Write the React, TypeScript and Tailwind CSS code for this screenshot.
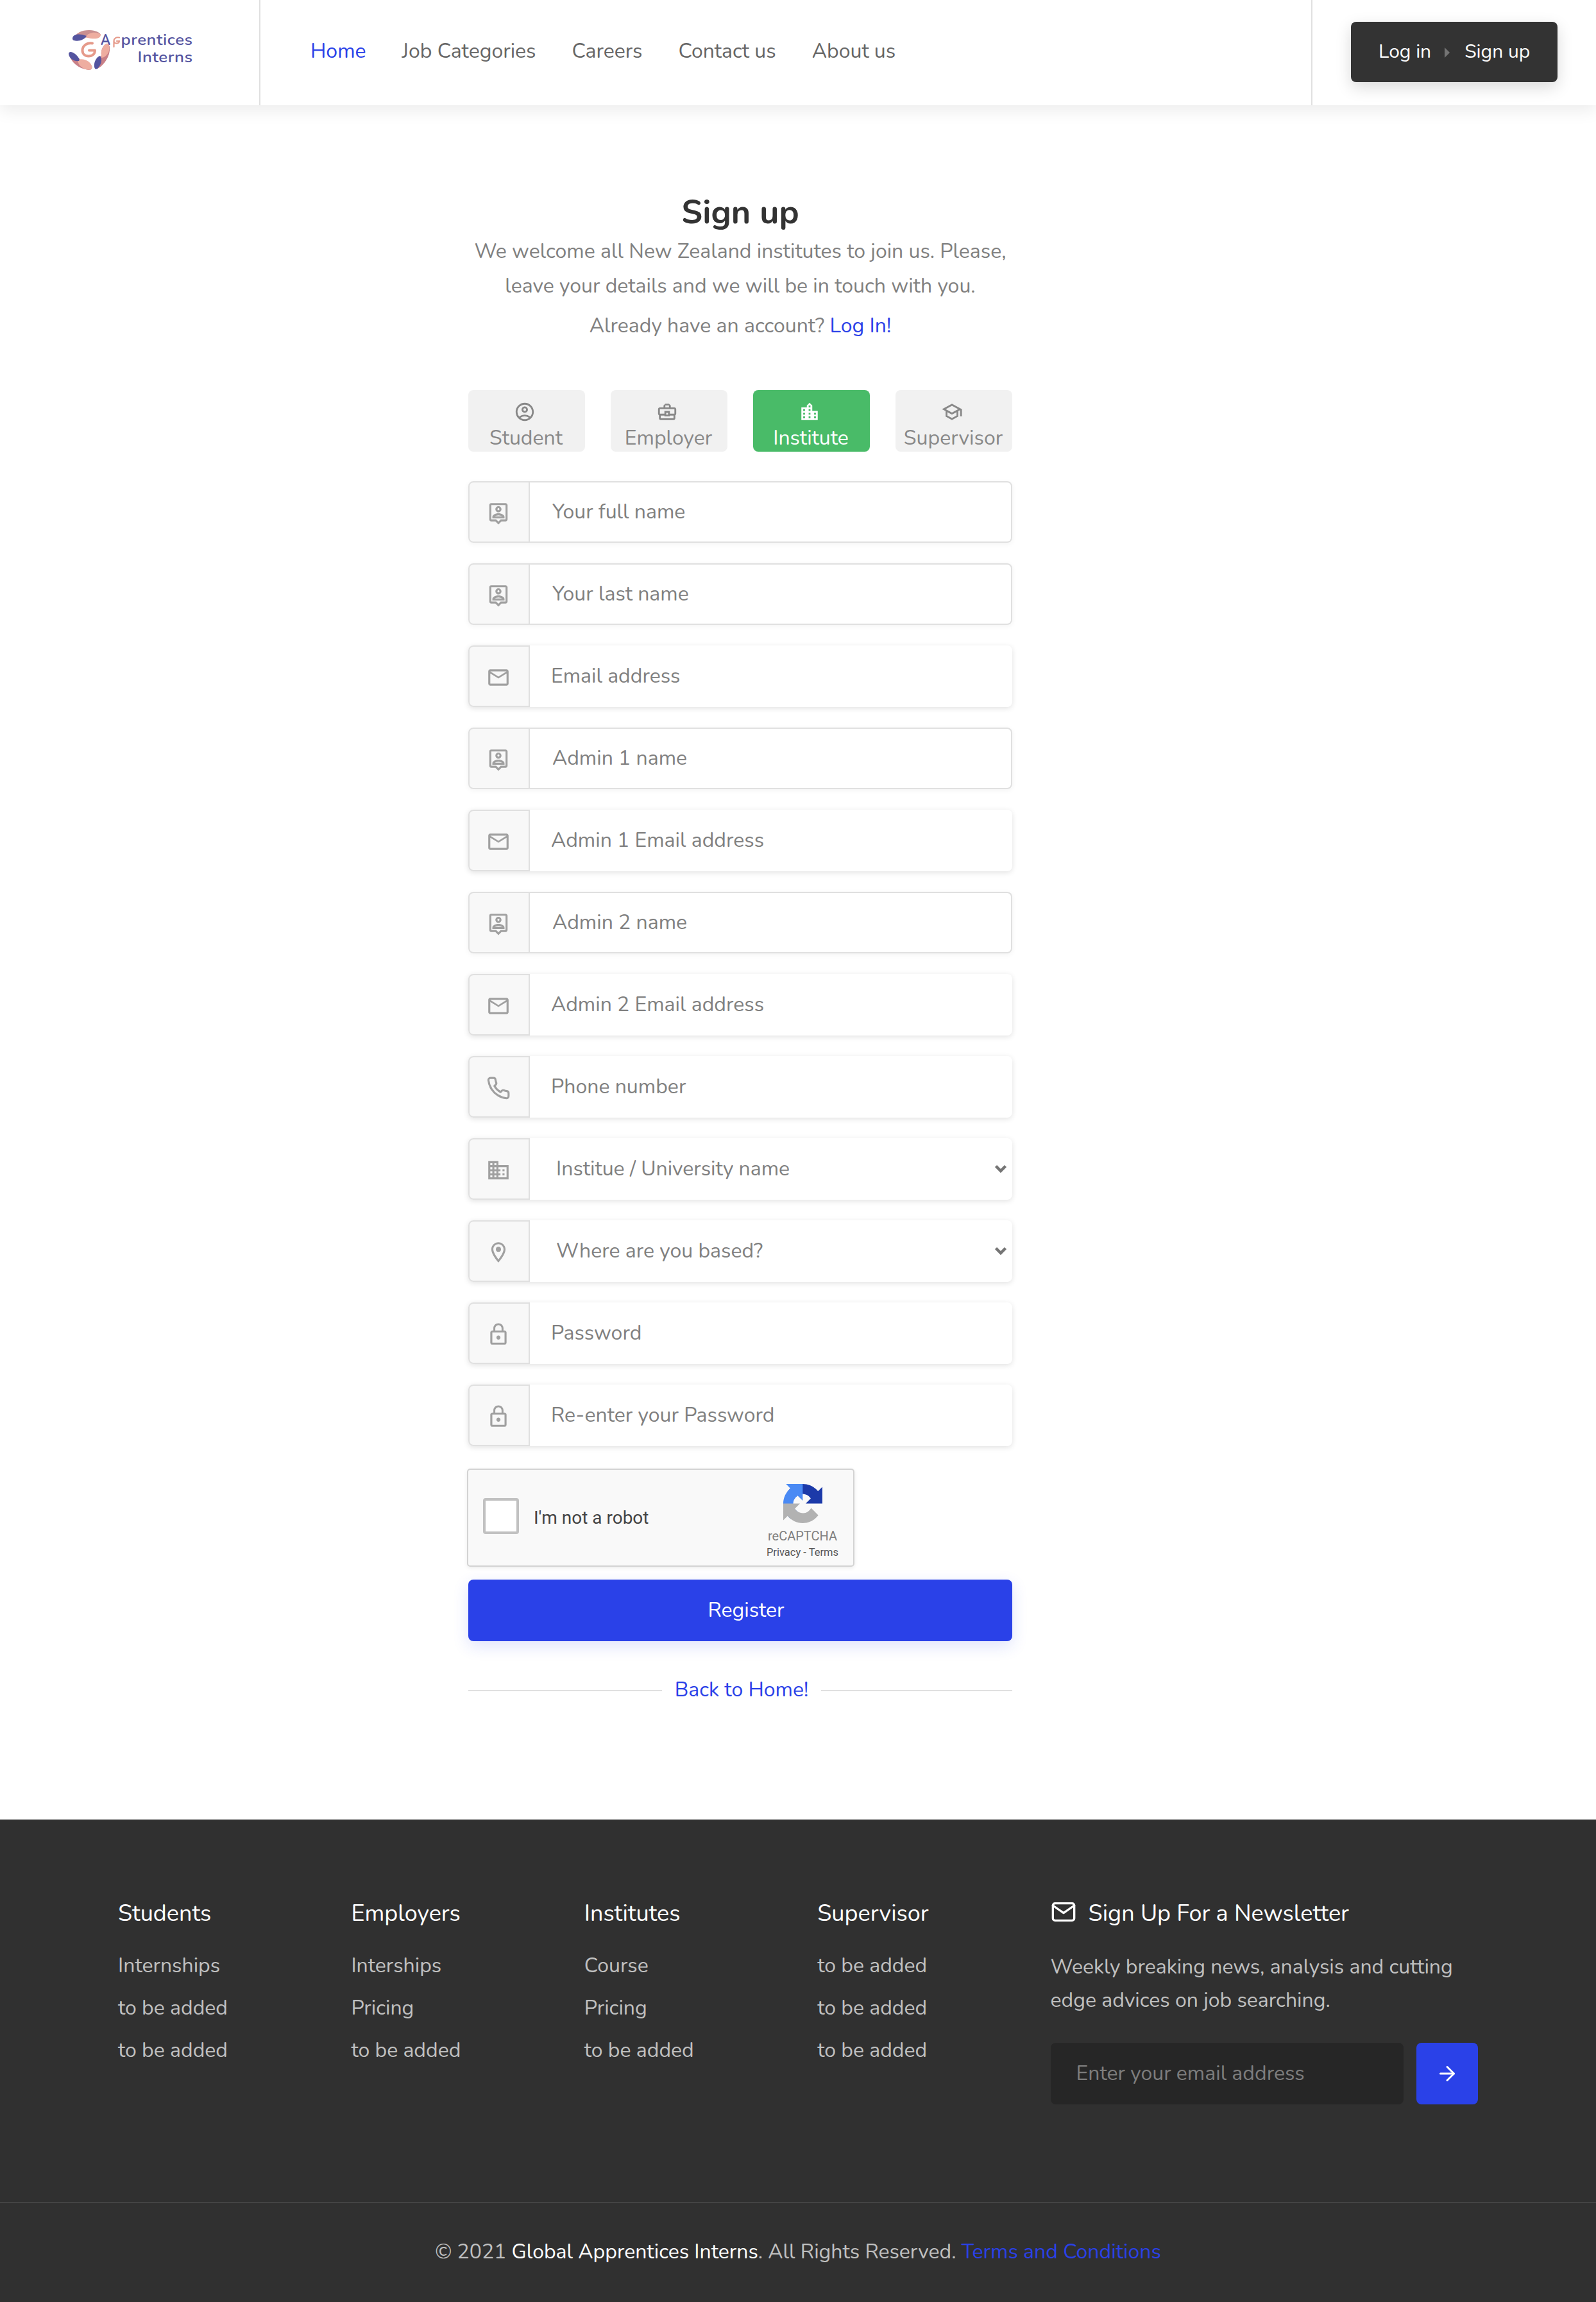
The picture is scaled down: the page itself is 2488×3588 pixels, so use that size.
import React from 'react';
import type { IconType } from 'react-icons';
import { FiArrowRight, FiMail, FiPhone } from 'react-icons/fi';
import {
  MdBusiness,
  MdLocationCity,
  MdLockOutline,
  MdOutlineAccountCircle,
  MdOutlineBusinessCenter,
  MdOutlineEmail,
  MdOutlineLocationOn,
  MdOutlinePersonPin,
  MdOutlineSchool,
} from 'react-icons/md';

type Field = { label: string; icon: IconType; kind: 'bordered' | 'plain' | 'select' };

const fields: Field[] = [
  { label: 'Your full name', icon: MdOutlinePersonPin, kind: 'bordered' },
  { label: 'Your last name', icon: MdOutlinePersonPin, kind: 'bordered' },
  { label: 'Email address', icon: MdOutlineEmail, kind: 'plain' },
  { label: 'Admin 1 name', icon: MdOutlinePersonPin, kind: 'bordered' },
  { label: 'Admin 1 Email address', icon: MdOutlineEmail, kind: 'plain' },
  { label: 'Admin 2 name', icon: MdOutlinePersonPin, kind: 'bordered' },
  { label: 'Admin 2 Email address', icon: MdOutlineEmail, kind: 'plain' },
  { label: 'Phone number', icon: FiPhone, kind: 'plain' },
  { label: 'Institue / University name', icon: MdBusiness, kind: 'select' },
  { label: 'Where are you based?', icon: MdOutlineLocationOn, kind: 'select' },
  { label: 'Password', icon: MdLockOutline, kind: 'plain' },
  { label: 'Re-enter your Password', icon: MdLockOutline, kind: 'plain' },
];

const roles: { label: string; icon: IconType; active?: boolean }[] = [
  { label: 'Student', icon: MdOutlineAccountCircle },
  { label: 'Employer', icon: MdOutlineBusinessCenter },
  { label: 'Institute', icon: MdLocationCity, active: true },
  { label: 'Supervisor', icon: MdOutlineSchool },
];

const footerColumns = [
  { title: 'Students', links: ['Internships', 'to be added', 'to be added'] },
  { title: 'Employers', links: ['Interships', 'Pricing', 'to be added'] },
  { title: 'Institutes', links: ['Course', 'Pricing', 'to be added'] },
  { title: 'Supervisor', links: ['to be added', 'to be added', 'to be added'] },
];

function Logo() {
  return (
    <svg className="ml-[104px] mt-[40px] h-[76px] w-[204px]" viewBox="104 40 204 76" aria-label="Global Apprentices Interns">
      <path d="M114 60C118 51 129 46.500 140 47C149 47.500 155 50 157 54C152 62 143 60 136 58C130 60 119 62 114 60Z" fill="#c98f90" />
      <path d="M133 58C139 48 153 50 157 54C157 61 146 62 133 58Z" fill="#eeada0" />
      <path d="M113 60C113 54 122 51 135 56C131 63 121 65 115 63C113.500 62.500 113 61 113 60Z" fill="#54549f" />
      <path d="M108 86C111 96 121 107 138 109C144 109 144 106 143 102C133 99 122 92 118 85Z" fill="#c98087" />
      <path d="M121 93C132 90 143 97 143.500 105C143 110 136 109 131 107C125 104 121 99 121 93Z" fill="#eeada0" />
      <path d="M107 84C107 80 112 80 117 84C122 88 125 93 123 95C116 96 108 92 107 84Z" fill="#54549f" />
      <path d="M158 86C157 79 160 71 166 68C172 68 172 76 170 84C167 94 160 103 152 107C151 99 154 92 158 86Z" fill="#c98087" />
      <path d="M158 86C157 79 160 71 166 68C171 68 171.500 76 169 82C166 87 162 90 158 90Z" fill="#eeada0" />
      <path d="M147 104C146 97 150 89 156 87C160 92 158 101 152 107C149 109 147.500 107 147 104Z" fill="#54549f" />
      <path d="M144 67.500C135 66 128.500 72 128.500 78.500C128.500 84 132.500 87.500 138 87.500C144 87.500 148 84 148 78.500H139" fill="none" stroke="#e59a8a" strokeWidth="4" strokeLinecap="round" strokeLinejoin="round" />
      <text x="157" y="70" textLength="15" lengthAdjust="spacingAndGlyphs" className="fill-[#54549f] font-['Nunito','Lato',sans-serif] text-[24px] font-bold">A</text>
      <path d="M186 58.500C181 57.500 177.500 60 177.500 64V73M177.500 64C178 68.500 186 69 186 64H182" fill="none" stroke="#e59a8a" strokeWidth="2.200" strokeLinecap="round" />
      <text x="188.500" y="70" textLength="112" lengthAdjust="spacingAndGlyphs" className="fill-[#54549f] font-['Nunito','Lato',sans-serif] text-[24px] font-semibold tracking-[0.5px]">prentices</text>
      <text x="214.500" y="97" textLength="86" lengthAdjust="spacingAndGlyphs" className="fill-[#54549f] font-['Nunito','Lato',sans-serif] text-[24px] font-semibold tracking-[0.5px]">Interns</text>
    </svg>
  );
}

function Header() {
  return (
    <header className="relative flex h-[164px] bg-white shadow-[0_8px_24px_rgba(0,0,0,0.08)]">
      <div className="w-[406px] shrink-0 border-r-2 border-[#e0e0e0]">
        <Logo />
      </div>
      <nav className="flex gap-[56px] pl-[78px] pt-[58px] text-[32px] leading-[43px] text-[#666666]">
        <a className="text-[#2a41e8]">Home</a>
        <a>Job Categories</a>
        <a>Careers</a>
        <a>Contact us</a>
        <a>About us</a>
      </nav>
      <div className="ml-auto w-[444px] border-l-2 border-[#e0e0e0] pl-[60px] pt-[34px]">
        <div className="flex h-[94px] w-[322px] rounded-[8px] bg-[#333333] pl-[43px] pt-[26px] text-[30px] leading-[41px] text-white shadow-[0_8px_24px_rgba(0,0,0,0.15)]">
          <a>Log in</a>
          <svg className="ml-[21px] mt-[14px] h-[16px] w-[8px]" viewBox="0 0 8 16">
            <path d="M0 0L8 8L0 16Z" fill="#747474" />
          </svg>
          <a className="ml-[23px]">Sign up</a>
        </div>
      </div>
    </header>
  );
}

function RoleTabs() {
  return (
    <div className="mt-[79px] flex gap-[40px]">
      {roles.map(({ label, icon: Icon, active }) => (
        <div
          key={label}
          className={`flex h-[96px] w-[182px] flex-col items-center rounded-[8px] pt-[17px] ${active ? 'bg-[#49bb68] text-white' : 'bg-[#f1f1f1] text-[#888888]'}`}
        >
          <Icon className="mr-[6px] size-[36px]" />
          <span className="mr-[2px] mt-[2px] text-[32px] leading-[43px]">{label}</span>
        </div>
      ))}
    </div>
  );
}

function FieldRow({ label, icon: Icon, kind }: Field) {
  const bordered = kind === 'bordered';
  return (
    <div
      className={`flex h-[96px] rounded-[8px] bg-white ${bordered ? 'shadow-[0_2px_8px_rgba(0,0,0,0.05)]' : 'shadow-[0_2px_8px_rgba(0,0,0,0.12)]'}`}
    >
      <div className="flex w-[96px] shrink-0 justify-center rounded-l-[8px] border-2 border-[#e0e0e0] bg-[#f8f8f8] pt-[29px]">
        <Icon className="mr-[2px] size-[38px] text-[#a0a0a0]" />
      </div>
      <div
        className={`flex grow justify-between rounded-r-[8px] text-[32px] leading-[43px] text-[#808080] ${
          bordered ? 'border-2 border-l-0 border-[#e0e0e0] pl-[35px] pt-[24px]' : kind === 'select' ? 'pl-[41px] pt-[26px]' : 'pl-[33px] pt-[26px]'
        }`}
      >
        <span>{label}</span>
        {kind === 'select' && (
          <svg className="mr-[8px] mt-[14px] h-[16px] w-[20px]" viewBox="0 0 20 16">
            <path d="M2.500 3.500L10 11L17.500 3.500" fill="none" stroke="#757575" strokeWidth="4.500" />
          </svg>
        )}
      </div>
    </div>
  );
}

function Recaptcha() {
  return (
    <div className="-ml-[2px] mt-[35px] flex h-[153px] w-[604px] rounded-[5px] border-2 border-[#d3d3d3] bg-[#f9f9f9] font-['Roboto',sans-serif] shadow-[0_2px_6px_rgba(0,0,0,0.08)]">
      <div className="ml-[23px] mt-[44px] size-[56px] rounded-[4px] border-4 border-[#c1c1c1] bg-white" />
      <span className="ml-[23px] mt-[57px] text-[28px] leading-[36px] text-[#444444]">I'm not a robot</span>
      <div className="ml-auto mr-[21px] flex w-[116px] flex-col items-center pt-[22px]">
        <svg className="size-[61px]" viewBox="0 0 64 64">
          <path fill="#1c3aa9" d="M64 31.955l-.033-1.37V4.687l-7.16 7.16C50.948 4.674 42.033.093 32.05.093c-10.4 0-19.622 4.96-25.458 12.64l11.736 11.86a15.55 15.55 0 0 1 4.754-5.334c2.05-1.6 4.952-2.906 8.968-2.906.485 0 .86.057 1.135.163 4.976.393 9.288 3.14 11.828 7.124l-8.307 8.307L64 31.953" />
          <path fill="#4a8af4" d="M31.862.094l-1.37.033H4.594l7.16 7.16C4.58 13.147 0 22.06 0 32.046c0 10.4 4.96 19.622 12.64 25.458L24.5 45.768a15.55 15.55 0 0 1-5.334-4.754c-1.6-2.05-2.906-4.952-2.906-8.968 0-.485.057-.86.163-1.135.393-4.976 3.14-9.288 7.124-11.828l8.307 8.307L31.86.095" />
          <path fill="#b2b2b2" d="M.001 32.045l.033 1.37v25.898l7.16-7.16c5.86 7.173 14.774 11.754 24.76 11.754 10.4 0 19.622-4.96 25.458-12.64l-11.736-11.86a15.55 15.55 0 0 1-4.754 5.334c-2.05 1.6-4.952 2.906-8.968 2.906-.485 0-.86-.057-1.135-.163-4.976-.393-9.288-3.14-11.828-7.124l8.307-8.307L.001 32.046" />
        </svg>
        <span className="mt-[7px] text-[20px] leading-[26px] text-[#808080]">reCAPTCHA</span>
        <span className="mt-px text-[16.500px] leading-[24px] text-[#555555]">Privacy - Terms</span>
      </div>
    </div>
  );
}

function SignUp() {
  return (
    <main className="ml-[730px] h-[2672px] w-[848px] pt-[131px] text-[32px] leading-[43px]">
      <h1 className="text-center text-[52px] font-bold leading-[71px] text-[#333333]">Sign up</h1>
      <div className="mt-[4px] flex flex-col gap-[11px] text-center text-[#808080]">
        <p>We welcome all New Zealand institutes to join us. Please,</p>
        <p>leave your details and we will be in touch with you.</p>
      </div>
      <p className="mt-[19px] text-center text-[#808080]">
        Already have an account? <a className="text-[#2a41e8]">Log In!</a>
      </p>
      <RoleTabs />
      <div className="mt-[46px] flex flex-col gap-[32px]">
        {fields.map((f) => (
          <FieldRow key={f.label} {...f} />
        ))}
      </div>
      <Recaptcha />
      <button className="mt-[20px] block h-[96px] w-full rounded-[8px] bg-[#2a41e8] pb-[27px] pl-[18px] pt-[26px] text-white shadow-[0_8px_24px_rgba(42,65,232,0.15)]">Register</button>
      <div className="mt-[54px] flex items-center">
        <span className="mt-[3px] h-[2px] w-[302px] bg-[#e0e0e0]" />
        <a className="grow text-center text-[#2a41e8]">Back to Home!</a>
        <span className="mt-[3px] h-[2px] w-[298px] bg-[#e0e0e0]" />
      </div>
    </main>
  );
}

function Footer() {
  return (
    <footer className="bg-[#303030] text-[32px] leading-[43px] text-[#c0c0c0]">
      <div className="flex h-[596px] pl-[184px] pt-[122px]">
        {footerColumns.map((c) => (
          <div key={c.title} className="w-[363.4px] shrink-0">
            <h3 className="text-[36px] leading-[49px] text-white">{c.title}</h3>
            <ul className="mt-[35px] flex flex-col gap-[23px]">
              {c.links.map((l, i) => (
                <li key={i}>{l}</li>
              ))}
            </ul>
          </div>
        ))}
        <div>
          <h3 className="flex text-[36px] leading-[49px] text-white">
            <FiMail className="mr-[19px] mt-[2px] size-[40px]" />
            Sign Up For a Newsletter
          </h3>
          <div className="mt-[37px] flex flex-col gap-[9px]">
            <p>Weekly breaking news, analysis and cutting</p>
            <p>edge advices on job searching.</p>
          </div>
          <div className="mt-[45px] flex gap-[20px]">
            <div className="h-[96px] w-[550px] rounded-[8px] bg-[#262626] pl-[40px] pt-[26px] text-[#7d7d7d]">Enter your email address</div>
            <div className="flex size-[96px] items-center justify-center rounded-[8px] bg-[#2a41e8] text-white">
              <FiArrowRight className="size-[36px]" />
            </div>
          </div>
        </div>
      </div>
      <div className="h-[156px] border-t-2 border-[#444444] pt-[54px] text-center">
        © 2021 <span className="text-white">Global Apprentices Interns</span>. All Rights Reserved. <a className="text-[#2a41e8]">Terms and Conditions</a>
      </div>
    </footer>
  );
}

export default function App() {
  return (
    <div className="w-[2488px] bg-white font-['Nunito','Lato',sans-serif]">
      <Header />
      <SignUp />
      <Footer />
    </div>
  );
}
